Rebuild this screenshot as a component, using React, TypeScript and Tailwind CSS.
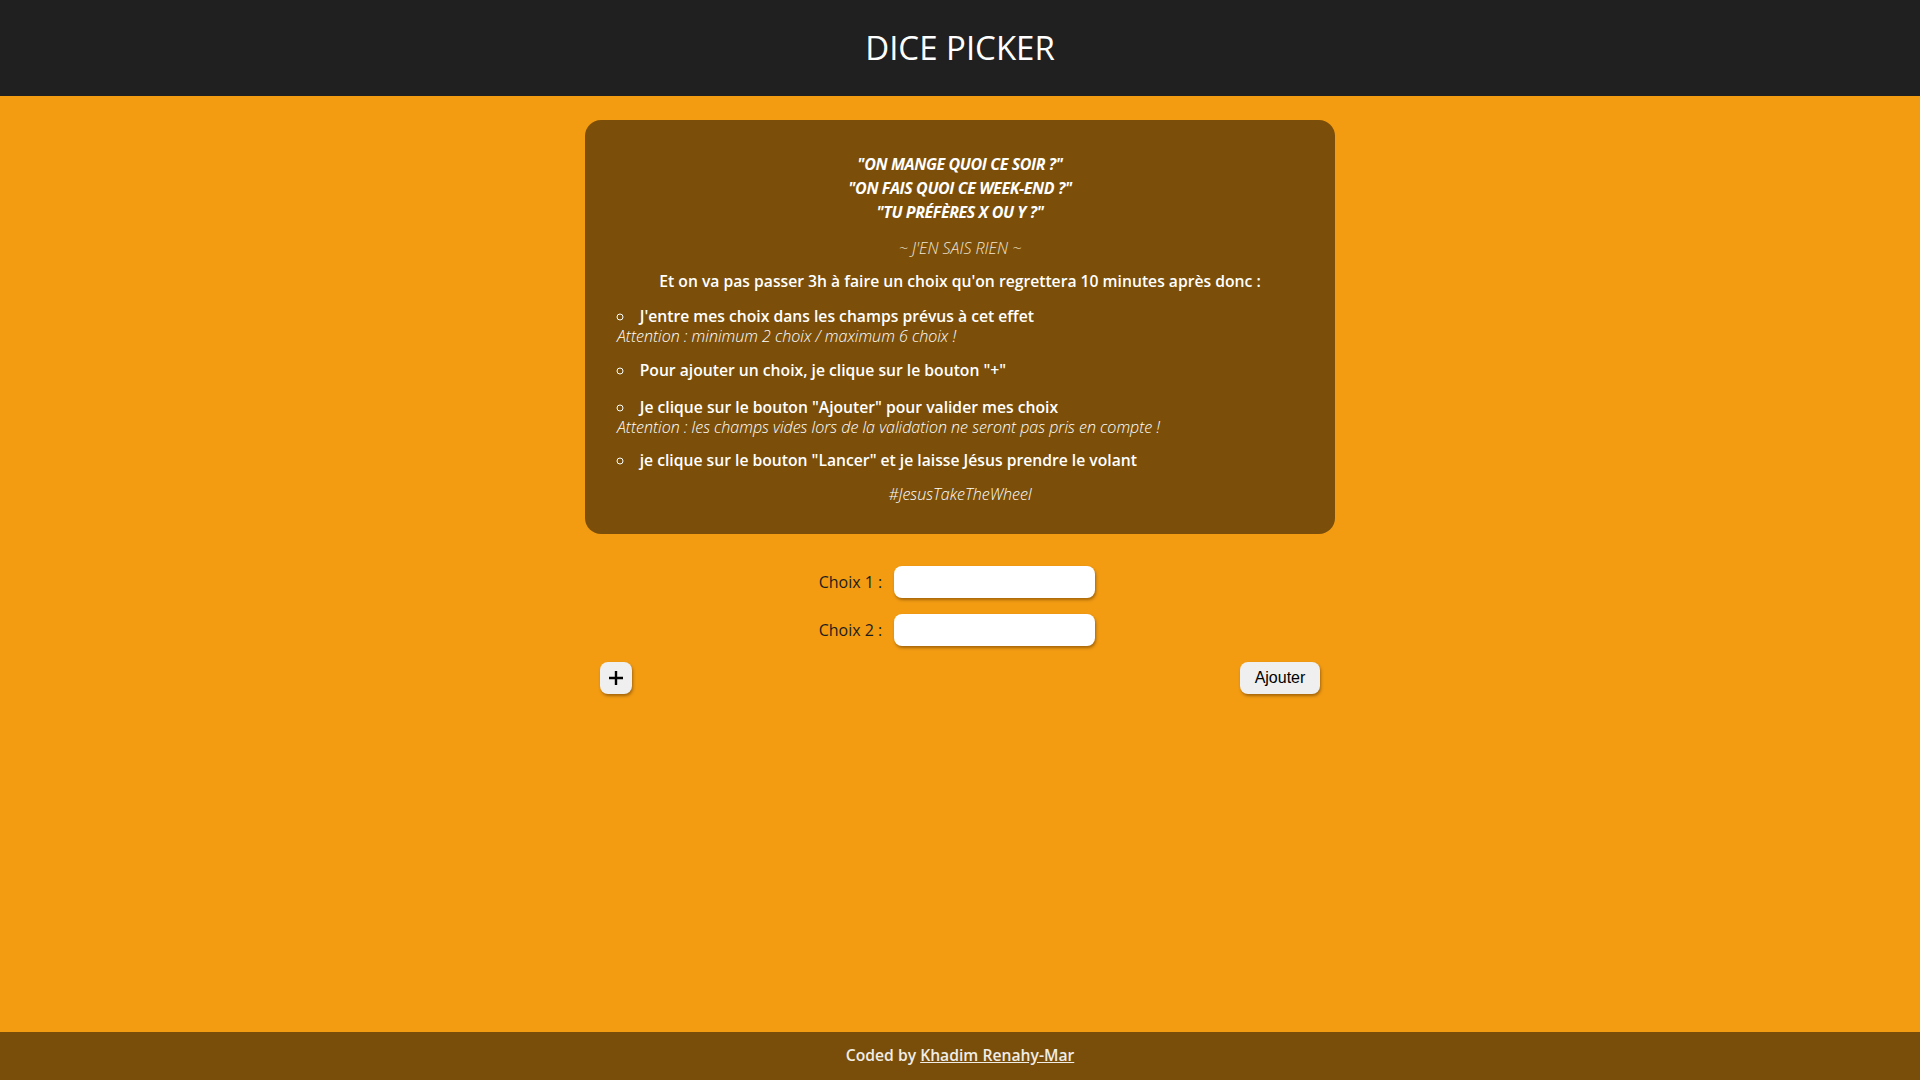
import { useState } from 'react';

const font = { fontFamily: '"Open Sans", "Liberation Sans", sans-serif' };

const Instructions = () => {
  return (
    <div className="w-[750px] rounded-2xl bg-[#7b4f09] px-8 pt-8 pb-[30px] text-center text-white">
      {/* Citations */}
      <div className="text-[16px] font-bold italic leading-6 tracking-tight">
        <p>"ON MANGE QUOI CE SOIR ?"</p>
        <p>"ON FAIS QUOI CE WEEK-END ?"</p>
        <p>"TU PRÉFÈRES X OU Y ?"</p>
      </div>
      <p className="mt-[14px] text-[16px] font-light italic leading-5 text-[#f1e6d6]">~ J'EN SAIS RIEN ~</p>
      <p className="mt-[13px] text-[15.7px] font-semibold leading-5">
        Et on va pas passer 3h à faire un choix qu'on regrettera 10 minutes après donc :
      </p>

      <ul className="mt-[15px] list-inside list-[circle] text-left text-[15.7px] leading-5">
        <li className="font-semibold">
          J'entre mes choix dans les champs prévus à cet effet
          <br />
          <span className="text-[16px] font-light italic">Attention : minimum 2 choix / maximum 6 choix !</span>
        </li>
        <li className="mt-[14px] font-semibold">Pour ajouter un choix, je clique sur le bouton "+"</li>
        <li className="mt-[17px] font-semibold">
          Je clique sur le bouton "Ajouter" pour valider mes choix
          <br />
          <span className="text-[16px] font-light italic">
            Attention : les champs vides lors de la validation ne seront pas pris en compte !
          </span>
        </li>
        <li className="mt-[13px] font-semibold">je clique sur le bouton "Lancer" et je laisse Jésus prendre le volant</li>
      </ul>

      <p className="mt-[14px] text-[16px] font-light italic leading-5">#JesusTakeTheWheel</p>
    </div>
  );
};

const ChoiceRow = ({ index, value, onChange }: { index: number; value: string; onChange: (v: string) => void }) => {
  return (
    <div className="flex items-center justify-center gap-3">
      <label className="text-[16px] text-[#1d1d1d]">Choix {index} :</label>
      <input
        type="text"
        value={value}
        onChange={e => onChange(e.target.value)}
        className="h-8 w-[201px] rounded-lg bg-white px-2 shadow-[1px_2px_3px_rgba(90,50,0,0.5)] outline-none"
      />
    </div>
  );
};

export default function App() {
  const [choices, setChoices] = useState<string[]>(['', '']);

  const update = (i: number, v: string) => {
    setChoices(prev => prev.map((c, j) => (j === i ? v : c)));
  };

  return (
    <div className="flex min-h-screen flex-col bg-[#f39c12]" style={font}>
      <header className="flex h-24 items-center justify-center bg-[#202020]">
        <h1 className="text-[33px] font-normal text-white">DICE PICKER</h1>
      </header>

      <main className="flex flex-1 flex-col items-center pt-6">
        <Instructions />

        <div className="mt-8 flex flex-col gap-4 pr-[6px]">
          {choices.map((c, i) => (
            <ChoiceRow key={i} index={i + 1} value={c} onChange={v => update(i, v)} />
          ))}
        </div>

        <div className="mt-4 flex w-[750px] items-center justify-between px-[15px]">
          <button
            onClick={() => choices.length < 6 && setChoices([...choices, ''])}
            className="flex h-8 w-8 items-center justify-center rounded-lg bg-[#efefef] text-black shadow-[1px_2px_3px_rgba(90,50,0,0.5)]"
          >
            <svg width="16" height="16" viewBox="0 0 16 16" fill="none" stroke="#000" strokeWidth="2.4">
              <path d="M8 1v14M1 8h14" />
            </svg>
          </button>
          <button
            className="h-8 w-20 rounded-lg bg-[#efefef] text-[16px] text-black shadow-[1px_2px_3px_rgba(90,50,0,0.5)]"
            style={{ fontFamily: '"Liberation Sans", Arial, sans-serif' }}
          >
            Ajouter
          </button>
        </div>
      </main>

      <footer className="flex h-12 items-center justify-center bg-[#784e0a] text-[15.7px] font-semibold text-[#f0ece6]">
        <p>
          Coded by{' '}
          <a href="#" className="underline">
            Khadim Renahy-Mar
          </a>
        </p>
      </footer>
    </div>
  );
}
